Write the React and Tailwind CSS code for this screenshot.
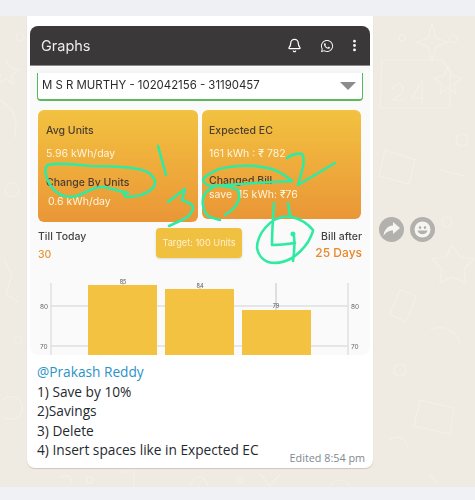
import { Bell, EllipsisVertical } from "lucide-react";
import { FaWhatsapp } from "react-icons/fa";

const poppins = "font-['Inter','Noto_Sans',sans-serif]";

// wallpaper doodles, very faint
const Doodles = () => (
  <svg className="absolute inset-0" width="475" height="500" fill="none" stroke="#f4f0e9" strokeWidth="1.2">
    <path d="M6 60l5 8 8 2-7 5 1 9-7-5-8 4 3-9" />
    <circle cx="20" cy="37" r="4" />
    <path d="M0 100c12 6 20 20 14 38" />
    <circle cx="12" cy="190" r="7" />
    <path d="M4 260l8 14-6 20 12 8" />
    <circle cx="18" cy="340" r="4" />
    <path d="M2 400c8-6 18-4 20 6s-8 16-18 12" />
    <path d="M432 24l4 14 12 4-12 5-4 14-4-14-12-5 12-4z" />
    <circle cx="453" cy="39" r="4" />
    <circle cx="402" cy="38" r="3" />
    <path d="M382 60l60 0 8 12 0 36-70 0z" />
    <path d="M392 90c4-10 14-8 10 4l-10 6h12M420 84l-8 14h14M422 80v22" />
    <path d="M448 66l4 10 10 2-8 6 2 10-8-6-8 6 2-10-8-6 10-2z" />
    <circle cx="462" cy="140" r="6" />
    <path d="M385 150l30 10-6 24-30-8zM440 170l26 6" />
    <path d="M452 245l8 12 14 2-10 10 2 14-14-6-12 6 2-14-10-10 14-2z" />
    <circle cx="447" cy="222" r="5" />
    <path d="M400 290l-10 24 16 8 10-26zM430 330c12-6 26 0 30 14" />
    <circle cx="400" cy="370" r="6" />
    <path d="M420 400l34 8-4 26-36-8zM390 440c8-6 16-2 18 8" />
    <path d="M60 478c8-6 14 0 10 8M120 472h14v14M190 486c4-12 14-12 18 0M260 474l10 12 10-12M330 486c6-8 14-8 20 0M430 474l8 10" />
    <circle cx="90" cy="480" r="3" />
    <circle cx="240" cy="480" r="3" />
  </svg>
);

const Chart = () => (
  <svg width="339" height="78" className="block" fontFamily="Inter, sans-serif">
    <rect width="339" height="78" fill="#fafafa" />
    <g stroke="#e0e0e0" strokeWidth="1.5">
      <path d="M21 6v72M318 6v72M21 29h297M21 69h297" />
    </g>
    <path d="M93 6v3M170 10v3M246 6v27" stroke="#c4c4c4" />
    <rect x="58" y="8" width="69" height="70" fill="#f2c240" />
    <rect x="135" y="12" width="69" height="66" fill="#f2c240" />
    <rect x="212" y="33" width="69" height="45" fill="#f2c240" />
    <g fontSize="5.5" fill="#555" textAnchor="middle">
      <text x="93" y="6.500">85</text>
      <text x="170" y="10.500">84</text>
      <text x="246" y="31">79</text>
    </g>
    <g fontSize="6.5" fill="#666">
      <text x="10" y="32">80</text>
      <text x="10" y="72">70</text>
      <text x="321" y="32">80</text>
      <text x="321" y="72">70</text>
    </g>
  </svg>
);

// the marker strokes drawn over the screenshot
const Scribbles = () => (
  <svg className="absolute inset-0 blur-[0.3px]" width="475" height="500" fill="none" stroke="#2feaa2" strokeWidth="2.6" strokeLinecap="round" strokeLinejoin="round">
    <path d="M125 196l-2-4 3 5c8 0 19-2 26-8 5-5 4-10-3-16-7-5-24-7-57-7-16-1-34-4-44-1-4 2-3 8 0 16 3 7 7 12 16 15 9 2 15 0 24-5 8-4 15-5 20-3l20 5" />
    <path d="M158 146l8 29" />
    <path d="M168 202l17-13-3 11c6 2 11 4 11 8-1 5-5 9-9 11l-15 7" />
    <path d="M287 158c5-4 12-5 15-4 2 3 2 8 1 13l-5 18 37-22" />
    <path d="M292 181c-7-6-15-11-24-13-10-2-21-3-30-2-11 1-19 2-23 5-5 2-11 6-12 9 1 4 5 6 9 6 15-1 28-2 43-3l37-2" />
    <path d="M238 202c2-4 1-9 0-12-6-3-16-5-23-4-6 3-11 7-12 12-1 7 1 13 4 17 4 3 9 4 13 5" />
    <path d="M238 202c-3 6-8 10-13 13" />
    <path d="M274 203c-1 14-2 28-2 42 8 0 16-1 23-2" />
    <path d="M288 203c1 5 1 10 3 14" />
    <path d="M294 236c1 9 0 18-1 25" />
    <path d="M292 217c-11-2-20 3-27 11-5 6-8 13-8 20 1 7 6 12 11 14 8 2 17 0 24-4 6-4 12-10 16-16 2-4 5-9 5-12-5-6-13-11-21-13z" />
    <circle cx="293" cy="234" r="1.2" />
  </svg>
);

export default function App() {
  return (
    <div className="relative w-[475px] h-[500px] overflow-hidden bg-[#efeae2] flex flex-col">
      <Doodles />
      <div className="relative h-4 bg-[#eef0f4] shrink-0" />

      <div className="relative flex-1 flex items-start pl-[27px]">
        {/* message bubble */}
        <div className="w-[346px] h-[452px] bg-white rounded-b-lg shadow-[0_1px_1px_rgba(0,0,0,0.15)] flex flex-col">
          <div className={`mt-2.5 mx-[3px] rounded-lg overflow-hidden bg-[#fafafa] blur-[0.3px] ${poppins}`}>
            <div className="h-10 bg-[#3a3839] border-b border-[#8a8a8a] flex items-center pl-[11px] pr-2 text-[#ececec]">
              <span className="text-[14.5px] flex-1">Graphs</span>
              <Bell size={15} strokeWidth={2} className="text-white mr-[18px]" />
              <FaWhatsapp size={14} className="text-[#eeeeee] mr-[13px]" />
              <EllipsisVertical size={15} strokeWidth={2.5} className="text-white" />
            </div>

            <div className="mt-[7px] mx-[7px] h-[28px] bg-white border-b-2 border-l border-r border-[#5cb85c] rounded-b-sm shadow-[0_-3px_4px_rgba(0,0,0,0.03)] flex items-center pl-[4px] pr-[6px] text-[#2b2b2b]">
              <span className="text-[11.4px] flex-1">M S R MURTHY - 102042156 - 31190457</span>
              <span className="w-0 h-0 border-x-[8px] border-x-transparent border-t-[8px] border-t-[#8c8c8c]" />
            </div>

            <div className="mt-[9px] mx-2 flex items-start gap-1">
              <div className="w-[160px] h-[112px] rounded-md bg-gradient-to-b from-[#f2c240] to-[#ea9637] pl-2 pt-[13px] text-[10.5px]">
                <div className="text-[#4b3f30] font-medium h-[23px]">Avg Units</div>
                <div className="text-[#fff4dc] h-[29px]">5.96 kWh/day</div>
                <div className="text-[#4b3f30] font-medium h-[19px]">Change By Units</div>
                <div className="text-[#fff4dc] pl-0.5">0.6 kWh/day</div>
              </div>
              <div className="w-[159px] h-[109px] rounded-md bg-gradient-to-b from-[#f2c240] to-[#ea9637] pl-[7px] pt-[13px] text-[10.5px]">
                <div className="text-[#4b3f30] font-medium h-[23px]">Expected EC</div>
                <div className="text-[#fff4dc] h-[27px]">161 kWh : ₹ 782</div>
                <div className="text-[#4b3f30] font-medium h-[14px]">Changed Bill</div>
                <div className="text-[#fff4dc]">save&nbsp; 15 kWh: ₹76</div>
              </div>
            </div>

            <div className="mt-[6px] mx-2 h-[30px] flex items-start">
              <div className="w-[118px] text-[10.5px] pt-px">
                <div className="text-[#444] font-medium">Till Today</div>
                <div className="text-[#e8963a] mt-[2px] font-medium">30</div>
              </div>
              <div className="w-[86px] h-[30px] bg-[#f0c140] rounded-sm shadow-sm flex items-center justify-center text-[9.2px] text-[#fff0d0]">
                Target: 100 Units
              </div>
              <div className="flex-1 text-right pt-px">
                <div className="text-[10.5px] text-[#444] font-medium">Bill after</div>
                <div className="text-[12px] text-[#e8882a] font-medium leading-4">25 Days</div>
              </div>
            </div>

            <div className="mt-[19px]">
              <Chart />
            </div>
          </div>

          <div className="relative flex-1 pl-[10px] pt-[7px] font-['Open_Sans',sans-serif] text-[13.7px] leading-[19.5px] text-[#1f2a30]">
            <div className="text-[#2a93c6]">@Prakash Reddy</div>
            <div>1) Save by 10%</div>
            <div>2)Savings</div>
            <div>3) Delete</div>
            <div>4) Insert spaces like in Expected EC</div>
            <div className="absolute right-2 bottom-px text-[10.8px] text-[#7d8a93]">Edited 8:54 pm</div>
          </div>
        </div>

        {/* hover actions */}
        <div className="mt-[201px] ml-1.5 flex gap-[6px]">
          <div className="w-[25px] h-[25px] rounded-full bg-[#b3b1ad] flex items-center justify-center">
            <svg width="17" height="15" viewBox="0 0 17 15" fill="#f7f5f2">
              <path d="M10 0l7 6-7 6V8.500C6 8.500 3 10 .5 14 1 8.500 4 4 10 3.500z" />
            </svg>
          </div>
          <div className="w-[25px] h-[25px] rounded-full bg-[#b3b1ad] flex items-center justify-center">
            <svg width="17" height="17" viewBox="0 0 17 17">
              <circle cx="8.500" cy="8.500" r="8" fill="#f7f5f2" />
              <ellipse cx="6" cy="6.500" rx="1.200" ry="1.600" fill="#b3b1ad" />
              <ellipse cx="11" cy="6.500" rx="1.200" ry="1.600" fill="#b3b1ad" />
              <path d="M3.500 9.500c1 5 9 5 10 0z" fill="#b3b1ad" />
            </svg>
          </div>
        </div>
      </div>

      <div className="relative h-[13px] bg-[#eff1f5] shrink-0" />
      <Scribbles />
    </div>
  );
}
